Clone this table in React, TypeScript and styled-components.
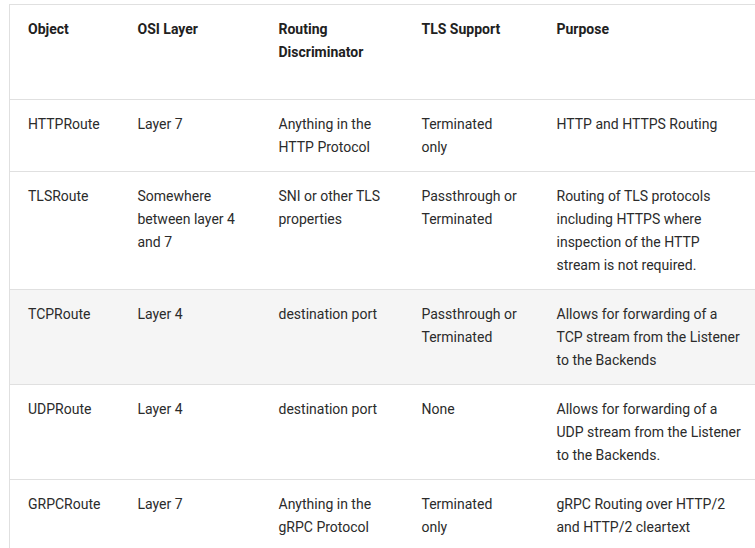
import styled, { createGlobalStyle } from 'styled-components';

const GlobalStyle = createGlobalStyle`
  html, body {
    margin: 0;
    padding: 0;
    background: #ffffff;
  }
  body {
    font-family: Roboto, "Liberation Sans", Arial, sans-serif;
    color: #222222;
    overflow: hidden;
  }
`;

let Page = styled.div`
  width: 755px;
  height: 548px;
  overflow: hidden;
  padding: 4px 0 0 9px;
  box-sizing: border-box;
`;

let Table = styled.table`
  table-layout: fixed;
  width: 755px;
  border-collapse: collapse;
  border: 1px solid #e0e0e0;
  font-size: 14px;
  line-height: 23px;
`;

let HeadCell = styled.th<{ $w: number }>`
  box-sizing: border-box;
  width: ${(p) => p.$w}px;
  padding: 12.5px 18px 35.5px;
  text-align: left;
  vertical-align: top;
  font-weight: 700;
  color: #212121;
`;

let Row = styled.tr<{ $shaded?: boolean }>`
  border-top: 1px solid #e0e0e0;
  background: ${(p) => (p.$shaded ? '#f5f5f5' : '#ffffff')};
`;

let Cell = styled.td`
  padding: 12.5px 18px;
  vertical-align: top;
  font-weight: 400;
  color: #2b2b2b;
`;

const columns: { label: string; width: number }[] = [
  { label: 'Object', width: 110 },
  { label: 'OSI Layer', width: 141 },
  { label: 'Routing Discriminator', width: 143 },
  { label: 'TLS Support', width: 135 },
  { label: 'Purpose', width: 226 },
];

const rows: string[][] = [
  ['HTTPRoute', 'Layer 7', 'Anything in the HTTP Protocol', 'Terminated only', 'HTTP and HTTPS Routing'],
  [
    'TLSRoute',
    'Somewhere between layer 4 and 7',
    'SNI or other TLS properties',
    'Passthrough or Terminated',
    'Routing of TLS protocols including HTTPS where inspection of the HTTP stream is not required.',
  ],
  [
    'TCPRoute',
    'Layer 4',
    'destination port',
    'Passthrough or Terminated',
    'Allows for forwarding of a TCP stream from the Listener to the Backends',
  ],
  [
    'UDPRoute',
    'Layer 4',
    'destination port',
    'None',
    'Allows for forwarding of a UDP stream from the Listener to the Backends.',
  ],
  ['GRPCRoute', 'Layer 7', 'Anything in the gRPC Protocol', 'Terminated only', 'gRPC Routing over HTTP/2 and HTTP/2 cleartext'],
];

const App = () => {
  return (
    <>
      <GlobalStyle />
      <Page>
        <Table>
          <thead>
            <tr>
              {columns.map((c) => (
                <HeadCell key={c.label} $w={c.width}>
                  {c.label}
                </HeadCell>
              ))}
            </tr>
          </thead>
          <tbody>
            {rows.map((r, i) => (
              <Row key={r[0]} $shaded={i === 2}>
                {r.map((v, j) => (
                  <Cell key={j}>{v}</Cell>
                ))}
              </Row>
            ))}
          </tbody>
        </Table>
      </Page>
    </>
  );
};

export default App;
